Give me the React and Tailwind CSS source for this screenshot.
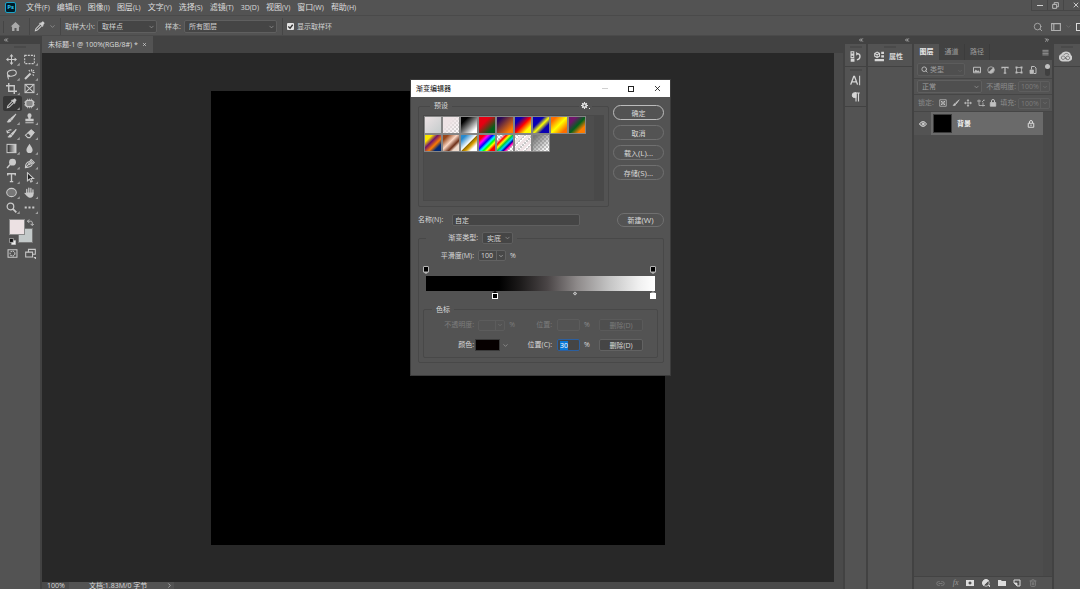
import { useEffect, useRef, useState } from "react";
import {
  ChevronDown,
  ChevronRight,
  ChevronsLeft,
  ChevronsRight,
  Eye,
  Link2,
  Search,
  Trash2,
  X,
} from "lucide-react";

const menus = [
  ["文件", "(F)"],
  ["编辑", "(E)"],
  ["图像", "(I)"],
  ["图层", "(L)"],
  ["文字", "(Y)"],
  ["选择", "(S)"],
  ["滤镜", "(T)"],
  ["", "3D(D)"],
  ["视图", "(V)"],
  ["窗口", "(W)"],
  ["帮助", "(H)"],
];

const Glyph = ({ children, className = "size-[11px]" }) => (
  <svg
    viewBox="0 0 16 16"
    fill="none"
    stroke="currentColor"
    strokeWidth="1.5"
    className={`shrink-0 ${className}`}
    aria-hidden="true"
  >
    {children}
  </svg>
);

const Eyedropper = ({ className }) => (
  <Glyph className={className}>
    <path d="M9 5 2.8 11.2 2 14l2.800-.8L11 7" />
    <path d="m8 3.500 4.500 4.500 1-1-1-1 1.800-1.800c1.400-1.600-1-4-2.600-2.600L10 3.500l-1-1z" fill="currentColor" strokeWidth="1" />
  </Glyph>
);

const Brush = ({ className }) => (
  <Glyph className={className}>
    <path d="M14.500 1.500 7 8l1.500 1.800z" fill="currentColor" />
    <path d="M6 8.500c-3 0-2.500 3.500-5 4.500 2.500 1.500 7 1 7-2.300z" fill="currentColor" stroke="none" />
  </Glyph>
);

const MoveArrows = ({ className }) => (
  <Glyph className={className}>
    <path d="M8 2v12M2 8h12" />
    <path d="M8 0 5.200 3.500h5.600zM8 16l-2.800-3.500h5.600zM0 8l3.500-2.800v5.600zM16 8l-3.500-2.800v5.600z" fill="currentColor" stroke="none" />
  </Glyph>
);

const tools = [
  { name: "移动工具", icon: <MoveArrows /> },
  {
    name: "矩形选框工具",
    icon: (
      <Glyph>
        <rect x="1" y="2" width="14" height="12" strokeDasharray="3 1.500" />
      </Glyph>
    ),
  },
  {
    name: "套索工具",
    icon: (
      <Glyph>
        <ellipse cx="8.500" cy="6" rx="6.500" ry="4.300" transform="rotate(-12 8.500 6)" />
        <path d="M3 9c-1.500 1.500 0 3 1.500 2s-1-3-2-1.500S4 13 3.500 15" />
      </Glyph>
    ),
  },
  {
    name: "魔棒工具",
    icon: (
      <Glyph>
        <path d="m1.500 14.500 8-8" strokeWidth="3" />
        <path d="M11 .5v3M15.500 5h-3M7 1.500l1.500 2M14.500 9.500l-2-1.500M14.500 1.500l-2 2" />
      </Glyph>
    ),
  },
  {
    name: "裁剪工具",
    icon: (
      <Glyph>
        <path d="M4 0v12h12M0 4h12v12" strokeWidth="2" />
      </Glyph>
    ),
  },
  {
    name: "图框工具",
    icon: (
      <Glyph>
        <rect x="1.500" y="2" width="13" height="12" />
        <path d="m2 2.500 12 11M14 2.500l-12 11" />
      </Glyph>
    ),
  },
  { name: "吸管工具", icon: <Eyedropper /> },
  {
    name: "修补工具",
    icon: (
      <Glyph>
        <rect x="2.500" y="3.500" width="11" height="9" rx="3" fill="#888" strokeWidth="2" />
        <path d="M5 1v3M8 1v3M11 1v3M5 12v3M8 12v3M11 12v3M0 6h3M0 10h3M13 6h3M13 10h3" strokeWidth="1" />
      </Glyph>
    ),
  },
  { name: "画笔工具", icon: <Brush /> },
  {
    name: "仿制图章工具",
    icon: (
      <Glyph>
        <path d="M5 3.500a3 3 0 1 1 6 0c0 2-1.500 2.500-1.500 5H14V12H2V8.500h4.500c0-2.500-1.500-3-1.500-5zM2 13.500h12V15H2z" fill="currentColor" stroke="none" />
      </Glyph>
    ),
  },
  {
    name: "历史记录画笔工具",
    icon: (
      <Glyph>
        <path d="M15 2 8 8.500 9.500 10z" fill="currentColor" />
        <path d="M7 9c-2.500 0-2.500 3-5 4 2.500 1.500 7 1 7-1.800z" fill="currentColor" stroke="none" />
        <path d="M2 7c0-3 3-5 6-4M1 3.500 2 7l3.500-1" />
      </Glyph>
    ),
  },
  {
    name: "橡皮擦工具",
    icon: (
      <Glyph>
        <path d="m2 10.500 3.500 3.500h3l6-7.500L10.500 3z" />
        <path d="M6.200 6.900 10.500 3l4 3.500-4 4.700z" fill="currentColor" />
      </Glyph>
    ),
  },
  {
    name: "渐变工具",
    icon: (
      <Glyph>
        <defs>
          <linearGradient id="tool-gradient">
            <stop offset="0" stopColor="#222" />
            <stop offset="1" stopColor="#ddd" />
          </linearGradient>
        </defs>
        <rect x="1.500" y="2" width="13" height="12" fill="url(#tool-gradient)" />
      </Glyph>
    ),
  },
  {
    name: "模糊工具",
    icon: (
      <Glyph>
        <path d="M8 1c2 3.500 4.500 6 4.500 9a4.500 4.500 0 0 1-9 0C3.500 7 6 4.500 8 1z" fill="currentColor" stroke="none" />
      </Glyph>
    ),
  },
  {
    name: "减淡工具",
    icon: (
      <Glyph>
        <circle cx="9.500" cy="6" r="5" fill="currentColor" stroke="none" />
        <path d="m6 9.500-4.500 5" strokeWidth="2" />
      </Glyph>
    ),
  },
  {
    name: "钢笔工具",
    icon: (
      <Glyph>
        <path d="M2 14c0-4 1-8 6-9l4 4c-1 4-6 5-10 5zl5-5M9 3.500l4.500 4.500 1.500-1.500L10.500 2z" />
        <circle cx="8" cy="8.500" r="1.200" />
      </Glyph>
    ),
  },
  {
    name: "横排文字工具",
    icon: (
      <Glyph>
        <path d="M2.500 5V2.500h11V5M8 2.500v11M5.500 14h5" strokeWidth="2" />
      </Glyph>
    ),
  },
  {
    name: "路径选择工具",
    icon: (
      <Glyph>
        <path d="M5 1v12l3-2.800 2 4.300 2-1-2-4h4z" fill="#222" />
      </Glyph>
    ),
  },
  {
    name: "椭圆工具",
    icon: (
      <Glyph>
        <ellipse cx="8" cy="8" rx="7" ry="6" fill="#777" />
      </Glyph>
    ),
  },
  {
    name: "抓手工具",
    icon: (
      <Glyph>
        <path d="M4 9V3.500M7 8V1.500M10 8V2M13 9V4" strokeWidth="1.800" strokeLinecap="round" />
        <path d="M3.200 8h10.700v2.500c0 3-2 5-4.700 5-3 0-4-1.500-8.700-6.500 1-1.300 2-.8 2.700.5z" fill="currentColor" stroke="none" />
      </Glyph>
    ),
  },
  {
    name: "缩放工具",
    icon: (
      <Glyph>
        <circle cx="6.500" cy="6.500" r="4.800" strokeWidth="1.800" />
        <path d="m10 10 5 5" strokeWidth="2.500" />
      </Glyph>
    ),
  },
  {
    name: "编辑工具栏",
    icon: (
      <Glyph>
        <path d="M1 8h3M6.500 8h3M12 8h3" strokeWidth="3" />
      </Glyph>
    ),
  },
];

const presets = [
  { name: "前景色到背景色渐变", fill: "bg-[linear-gradient(135deg,#eee3e5,#c2caca)]" },
  {
    name: "前景色到透明渐变",
    fill: "bg-[linear-gradient(135deg,#eee3e5_35%,transparent),conic-gradient(#c8c8c8_25%,#fff_0_50%,#c8c8c8_0_75%,#fff_0)] bg-[length:100%_100%,4px_4px]",
  },
  { name: "黑, 白渐变", fill: "bg-[linear-gradient(135deg,#000_25%,#fff_80%)]" },
  { name: "红, 绿渐变", fill: "bg-[linear-gradient(135deg,#e60012_35%,#00601b_75%)]" },
  { name: "紫, 橙渐变", fill: "bg-[linear-gradient(135deg,#290a59_20%,#ff7c00_80%)]" },
  { name: "蓝, 红, 黄渐变", fill: "bg-[linear-gradient(135deg,#0a00b2_25%,#ff0000_50%,#fffc00_75%)]" },
  { name: "蓝, 黄, 蓝渐变", fill: "bg-[linear-gradient(135deg,#0a00b2_35%,#fdff00_52%,#0a00b2_70%)]" },
  { name: "橙, 黄, 橙渐变", fill: "bg-[linear-gradient(135deg,#ff6e00_20%,#ffff00_50%,#ff6e00_80%)]" },
  { name: "紫, 绿, 橙渐变", fill: "bg-[linear-gradient(135deg,#6f156c_25%,#00601b_52%,#fd7c00_75%)]" },
  { name: "黄, 紫, 橙, 蓝渐变", fill: "bg-[linear-gradient(135deg,#f9e600_25%,#6f156c_42%,#fd7c00_60%,#002874_76%)]" },
  { name: "铜色渐变", fill: "bg-[linear-gradient(135deg,#97461a_20%,#fbd8c5_45%,#6c2e16_65%,#efdbcd_76%)]" },
  { name: "铬黄渐变", fill: "bg-[linear-gradient(135deg,#2989cc_20%,#fff_49%,#906a00_52%,#d99f00_62%,#fff_76%)]" },
  {
    name: "色谱",
    fill: "bg-[linear-gradient(135deg,#f00_20%,#f0f_32%,#00f_44%,#0ff_54%,#0f0_62%,#ff0_70%,#f00_80%)]",
  },
  {
    name: "透明彩虹渐变",
    fill: "bg-[linear-gradient(135deg,transparent_22%,#f00_32%,#ff0_41%,#0c4_50%,#0cf_58%,#00a_66%,#f0a_72%,transparent_80%),conic-gradient(#c8c8c8_25%,#fff_0_50%,#c8c8c8_0_75%,#fff_0)] bg-[length:100%_100%,4px_4px]",
  },
  {
    name: "透明条纹渐变",
    fill: "bg-[repeating-linear-gradient(135deg,#eee3e5_0_3px,transparent_3px_5px),conic-gradient(#c8c8c8_25%,#fff_0_50%,#c8c8c8_0_75%,#fff_0)] bg-[length:100%_100%,4px_4px]",
  },
  {
    name: "中灰密度",
    fill: "bg-[linear-gradient(135deg,#777_15%,transparent_85%),conic-gradient(#c8c8c8_25%,#fff_0_50%,#c8c8c8_0_75%,#fff_0)] bg-[length:100%_100%,4px_4px]",
  },
];

const Select = ({ label, value, className = "" }) => (
  <div className={`relative rounded-xs border border-[#5f5f5f] ${className}`}>
    <select aria-label={label} className="block h-full w-full appearance-none pl-1 leading-none outline-none">
      <option>{value}</option>
    </select>
    <ChevronDown size={7} className="pointer-events-none absolute top-1/2 right-px -translate-y-1/2 text-[#a8a8a8]" />
  </div>
);

const PercentField = ({ id, value, disabled, className = "" }) => (
  <div className={`flex rounded-xs border ${className}`}>
    <input
      id={id}
      type="text"
      defaultValue={value}
      disabled={disabled}
      className="h-full w-0 flex-1 border-r border-inherit pl-0.5 outline-none"
    />
    <button type="button" disabled={disabled} aria-label="展开滑块" className="flex w-2 items-center justify-center">
      <ChevronDown size={6} />
    </button>
  </div>
);

const MenuBar = () => (
  <header className="flex h-4 shrink-0 items-center border-b border-[#4a4a4a] pb-px pl-[5px] text-[8px] text-[#dedede]">
    <div className="flex size-[11px] items-center justify-center rounded-xs border border-[#1ba4c9] bg-[#001c28] text-[6px] leading-none font-bold text-[#31c5f0]">
      Ps
    </div>
    <nav className="ml-2.5 flex flex-1 gap-[7px] pb-px whitespace-nowrap">
      {menus.map(([label, hotkey]) => (
        <button key={hotkey} type="button" className="leading-none">
          {label}
          <span className="text-[7px]">{hotkey}</span>
        </button>
      ))}
    </nav>
    <div className="flex h-[11px] self-start text-[#c8c8c8]">
      <button type="button" aria-label="最小化" className="flex w-4 items-center justify-center border-b border-l border-[#464646]">
        <span className="h-px w-1.5 bg-[#d0d0d0]" />
      </button>
      <button type="button" aria-label="还原" className="flex w-4 items-center justify-center border-b border-l border-[#464646]">
        <Glyph className="size-[7px]">
          <path d="M1.500 5.500h9v9h-9zM5 5V1.500h9.500V11H11" strokeWidth="2" />
        </Glyph>
      </button>
      <button type="button" aria-label="关闭" className="flex w-[17px] items-center justify-end border-b border-l border-[#464646]">
        <X size={8} strokeWidth={3} />
      </button>
    </div>
  </header>
);

const OptionsBar = () => (
  <div className="flex h-5 shrink-0 items-center border-b border-[#4a4a4a] pt-0.5 pl-[3px] text-[#d0d0d0]">
    <span className="h-3 w-px bg-[#454545]" />
    <button type="button" aria-label="主页" className="ml-1.5 text-[#a9a9a9]">
      <Glyph>
        <path d="M8 1.500 1 8h2v6.500h3.500V10h3v4.500H13V8h2z" fill="currentColor" stroke="none" />
      </Glyph>
    </button>
    <span className="ml-2 h-full w-px bg-[#464646]" />
    <button type="button" aria-label="吸管工具" className="ml-1 flex items-center gap-1">
      <Eyedropper />
      <ChevronDown size={7} className="text-[#a8a8a8]" />
    </button>
    <span className="ml-1 h-full w-px bg-[#464646]" />
    <span className="ml-1 w-[32px] whitespace-nowrap">取样大小:</span>
    <Select label="取样大小" value="取样点" className="h-[13px] w-[60px] bg-[#454545]" />
    <span className="ml-2 w-[19px] whitespace-nowrap">样本:</span>
    <Select label="样本" value="所有图层" className="h-[13px] w-[93px] bg-[#454545]" />
    <span className="ml-[5px] h-full w-px bg-[#464646]" />
    <label className="ml-1 flex items-center gap-[3px] whitespace-nowrap">
      <span className="relative flex size-[7px]">
        <input type="checkbox" defaultChecked className="size-[7px] appearance-none rounded-[1px] bg-[#e4e4e4]" />
        <Glyph className="pointer-events-none absolute inset-0 size-[7px] text-[#333]">
          <path d="m3 8 4 4 6-8" strokeWidth="3" />
        </Glyph>
      </span>
      显示取样环
    </label>
    <div className="ml-auto flex items-center text-[#b0b0b0]">
      <button type="button" aria-label="搜索">
        <Search size={10} />
      </button>
      <button type="button" aria-label="选择工作区" className="ml-2 flex items-center gap-1">
        <Glyph className="size-[10px]">
          <path d="M1 2.500h14v11H1zM4.500 3v10" strokeWidth="1.800" />
        </Glyph>
        <ChevronDown size={7} className="text-[#777]" />
      </button>
      <button type="button" aria-label="共享" className="ml-1 h-2 w-1 border-y border-l border-[#dadada]" />
    </div>
  </div>
);

const ToolBar = () => {
  const [active, setActive] = useState("吸管工具");

  return (
    <aside className="flex w-[42px] shrink-0 flex-col border-r-2 border-[#424242] text-[#cacaca]">
      <div className="flex h-2 shrink-0 items-center bg-[#424242] pl-[3px]">
        <ChevronsLeft size={6} strokeWidth={3} />
      </div>
      <span className="mx-auto mt-0.5 h-0.5 w-3 shrink-0 bg-[#4a4a4a]" />
      <div className="mt-1 grid h-[163px] shrink-0 grid-cols-2 grid-rows-11 pl-[3px]">
        {tools.map((tool) => (
          <button
            key={tool.name}
            type="button"
            title={tool.name}
            onClick={() => setActive(tool.name)}
            className={`flex items-end justify-center rounded-xs pb-px ${active === tool.name ? "bg-[#363636]" : ""}`}
          >
            <span className="mb-px ml-px">{tool.icon}</span>
            <span className="size-[3px] bg-[#a0a0a0] [clip-path:polygon(100%_0,100%_100%,0_100%)]" />
          </button>
        ))}
      </div>
      {/* Foreground / background colours */}
      <div className="relative mt-1 ml-[9px] h-[26px] w-[26px] shrink-0">
        <button type="button" aria-label="背景色" className="absolute top-[9px] left-[9px] size-[15px] border border-[#777] bg-[#c3c9c9]" />
        <button type="button" aria-label="前景色" className="absolute top-0 left-0 size-4 border border-[#8a8a8a] bg-[#ece1e3]" />
        <button type="button" aria-label="切换颜色" className="absolute top-0 left-[18px]">
          <Glyph className="size-[7px]">
            <path d="M1 5h7c3 0 4 1 4 4v5M5 1 1 5l4 4M8 11l4 4 4-4" strokeWidth="2" />
          </Glyph>
        </button>
        <button type="button" aria-label="默认颜色" className="absolute bottom-0 left-0">
          <Glyph className="size-[7px]">
            <path d="M6 6h9v9H6z" fill="#eee" />
            <path d="M1 1h9v9H1z" fill="#111" />
          </Glyph>
        </button>
      </div>
      <div className="mt-[3px] grid shrink-0 grid-cols-2 place-items-center pl-[3px]">
        <button type="button" aria-label="快速蒙版">
          <Glyph>
            <path d="M1.500 2.500h13v11h-13z" />
            <circle cx="8" cy="8" r="3.500" strokeDasharray="2 1" />
          </Glyph>
        </button>
        <button type="button" aria-label="屏幕模式">
          <Glyph>
            <path d="M5 2h10v7H5z" />
            <path d="M1 6h10v7H1z" fill="#535353" />
            <path d="M14 14h2v2z" fill="currentColor" />
          </Glyph>
        </button>
      </div>
    </aside>
  );
};

const Workspace = () => (
  <main className="flex min-w-0 flex-1 flex-col border-r-2 border-[#424242]">
    <div className="flex h-[17px] shrink-0 bg-[#424242]">
      <div className="flex items-center gap-1 bg-[#535353] px-1.5 whitespace-nowrap text-[#dcdcdc]">
        <span>未标题-1 @ 100%(RGB/8#) *</span>
        <button type="button" aria-label="关闭文档">
          <X size={5} strokeWidth={3} />
        </button>
      </div>
    </div>
    <div className="flex min-h-0 flex-1">
      <div className="flex min-w-0 flex-1 items-center justify-center overflow-hidden bg-[#282828]">
        <div className="size-[454px] shrink-0 bg-black" />
      </div>
      <div className="w-[9px] shrink-0 bg-[#4a4a4a]" />
    </div>
    <footer className="flex shrink-0 bg-[#4a4a4a] leading-[7px] text-[#dcdcdc]">
      <span className="w-[27px] pl-[5px]">100%</span>
      <span className="flex w-[105px] items-center justify-between bg-[#535353] pr-px pl-5 whitespace-nowrap">
        文档:1.83M/0 字节
        <ChevronRight size={7} />
      </span>
    </footer>
  </main>
);

const DockHeader = ({ children }) => (
  <div className="flex h-2 shrink-0 items-center justify-end bg-[#424242] pr-0.5 text-[#d0d0d0]">{children}</div>
);

const Grip = () => <span className="mx-auto mt-0.5 h-0.5 w-3 shrink-0 bg-[#4a4a4a]" />;

const LayersPanel = () => (
  <section className="flex min-h-0 flex-1 flex-col text-[#9c9c9c]">
    <div className="flex h-4 shrink-0 items-stretch bg-[#424242]" role="tablist">
      <button type="button" role="tab" aria-selected="true" className="w-[25px] bg-[#535353] font-bold text-[#e6e6e6]">
        图层
      </button>
      <button type="button" role="tab" aria-selected="false" className="w-[26px] border-r border-[#3c3c3c]">
        通道
      </button>
      <button type="button" role="tab" aria-selected="false" className="w-[25px] border-r border-[#3c3c3c]">
        路径
      </button>
      <button type="button" aria-label="面板菜单" className="ml-auto pr-[3px]">
        <Glyph className="size-[7px]">
          <path d="M1 3h14M1 6.500h14M1 10h14M1 13.500h14" strokeWidth="2" />
        </Glyph>
      </button>
    </div>
    <div className="flex h-[19px] shrink-0 items-center border-b border-[#464646] pt-px pr-0.5 pl-[3px]">
      <div className="flex h-[13px] w-[48px] items-center rounded-xs border border-[#5c5c5c] bg-[#4f4f4f] pl-[3px]">
        <Search size={7} strokeWidth={3} className="text-[#c0c0c0]" />
        <div className="relative flex-1">
          <select aria-label="图层过滤" className="block w-full appearance-none pl-0.5 leading-none outline-none">
            <option>类型</option>
          </select>
          <ChevronDown size={6} className="pointer-events-none absolute top-0.5 right-px text-[#6c6c6c]" />
        </div>
      </div>
      <div className="ml-2 flex flex-1 items-center justify-between pr-2 text-[#bcbcbc]">
        <button type="button" aria-label="像素图层">
          <Glyph className="size-2">
            <path d="M1 2.500h14v11H1z" strokeWidth="2" />
            <path d="m2 12 3.500-5 3 3 2-1.500L14 12z" fill="currentColor" stroke="none" />
          </Glyph>
        </button>
        <button type="button" aria-label="调整图层">
          <Glyph className="size-2">
            <circle cx="8" cy="8" r="6.500" />
            <path d="M13 3.500A7 7 0 0 1 3.500 13z" fill="currentColor" />
          </Glyph>
        </button>
        <button type="button" aria-label="文字图层">
          <Glyph className="size-2">
            <path d="M2 5V2.500h12V5M8 2.500v11M5.500 14h5" strokeWidth="2.500" />
          </Glyph>
        </button>
        <button type="button" aria-label="形状图层">
          <Glyph className="size-2">
            <path d="M3 3h10v10H3z" />
            <path d="M1 1h4v4H1zM11 1h4v4h-4zM1 11h4v4H1zM11 11h4v4h-4z" fill="currentColor" stroke="none" />
          </Glyph>
        </button>
        <button type="button" aria-label="智能对象">
          <Glyph className="size-2">
            <path d="M5 7V1h6l3 3v11h-4" strokeWidth="2" />
            <path d="M2 8h7v7H2z" fill="currentColor" />
          </Glyph>
        </button>
      </div>
      <button type="button" aria-label="打开图层过滤" className="flex h-3 w-[5px] flex-col rounded-full bg-[#404040]">
        <span className="size-[5px] rounded-full bg-[#c2c2c2]" />
      </button>
    </div>
    <div className="flex h-4 shrink-0 items-center border-b border-[#464646] pr-0.5 pl-[3px] text-[#8c8c8c]">
      <Select label="混合模式" value="正常" className="h-[13px] flex-1 bg-[#4f4f4f] text-[#a0a0a0]" />
      <label htmlFor="layer-opacity" className="mr-0.5 ml-1 whitespace-nowrap">
        不透明度:
      </label>
      <PercentField id="layer-opacity" value="100%" className="h-[11px] w-8 border-[#5e5e5e] text-[#7c7c7c]" />
    </div>
    <div className="flex h-[17px] shrink-0 items-center border-b border-[#464646] pr-0.5 pl-1 text-[#8c8c8c]">
      <span className="w-[18px] whitespace-nowrap">锁定:</span>
      <div className="flex flex-1 items-center justify-between px-[3px] text-[#c0c0c0]">
        <button type="button" aria-label="锁定透明像素">
          <Glyph className="size-2">
            <path d="M1.500 1.500h13v13h-13z" />
            <path d="M4 4h3v3H4zM9 4h3v3H9zM6.500 6.500h3v3h-3zM4 9h3v3H4zM9 9h3v3H9z" fill="currentColor" stroke="none" />
          </Glyph>
        </button>
        <button type="button" aria-label="锁定图像像素">
          <Brush className="size-2" />
        </button>
        <button type="button" aria-label="锁定位置">
          <MoveArrows className="size-2" />
        </button>
        <button type="button" aria-label="防止嵌套">
          <Glyph className="size-2">
            <path d="M4 1v12h12M0 4h8M12 15V7M10 6l4-4M14 1v3" />
          </Glyph>
        </button>
        <button type="button" aria-label="锁定全部">
          <Glyph className="size-2">
            <path d="M2.500 7h11v7.500h-11z" fill="currentColor" />
            <path d="M5 7V4a3 3 0 0 1 6 0v3" strokeWidth="2" />
          </Glyph>
        </button>
      </div>
      <label htmlFor="layer-fill" className="mr-0.5 whitespace-nowrap">
        填充:
      </label>
      <PercentField id="layer-fill" value="100%" className="h-[11px] w-8 border-[#5e5e5e] text-[#7c7c7c]" />
    </div>
    <div className="flex min-h-0 flex-1">
      <div className="flex-1 bg-[#4d4d4d]">
        <div className="flex h-[23px] items-stretch bg-[#535353]">
          <button type="button" aria-label="图层可见性" className="flex w-[17px] items-center justify-center text-[#e4e4e4]">
            <Eye size={8} strokeWidth={3} />
          </button>
          <div className="flex flex-1 items-center bg-[#6a6a6a] pr-2 pl-0.5 text-[#f0f0f0]">
            <span className="size-[19px] border border-[#3a3a3a] bg-black" />
            <span className="ml-[5px] flex-1 font-bold">背景</span>
            <Glyph className="size-2 text-[#dcdcdc]">
              <path d="M2.500 6.500h11v8h-11z" strokeWidth="2" />
              <path d="M5 6V4a3 3 0 0 1 6 0v2M8 9v3" strokeWidth="2" />
            </Glyph>
          </div>
        </div>
      </div>
      <div className="w-[9px] bg-[#4a4a4a]" />
    </div>
    <div className="flex h-[13px] shrink-0 items-center justify-between border-t border-[#434343] pr-[15px] pl-[22px] text-[#dcdcdc]">
      <button type="button" aria-label="链接图层" className="text-[#858585]">
        <Link2 size={9} />
      </button>
      <button type="button" aria-label="图层样式" className="font-[Liberation_Serif] text-[8px] leading-none text-[#9a9a9a] italic">
        fx
      </button>
      <button type="button" aria-label="添加蒙版">
        <Glyph className="size-2">
          <path d="M0 2h16v12H0zM8 5a3 3 0 1 0 .01 0z" fill="currentColor" stroke="none" fillRule="evenodd" />
        </Glyph>
      </button>
      <button type="button" aria-label="新建调整图层">
        <Glyph className="size-2">
          <circle cx="8" cy="8" r="6.500" />
          <path d="M13 3A7 7 0 1 0 3 13z" fill="currentColor" />
          <path d="M13 13h3v3z" fill="currentColor" />
        </Glyph>
      </button>
      <button type="button" aria-label="新建组">
        <Glyph className="size-2">
          <path d="M0 2h6l1.500 2H16v10H0z" fill="currentColor" stroke="none" />
        </Glyph>
      </button>
      <button type="button" aria-label="新建图层">
        <Glyph className="size-2">
          <path d="M2 8V2h12v12H8" strokeWidth="2" />
          <path d="M2 8h6v6z" fill="currentColor" />
        </Glyph>
      </button>
      <button type="button" aria-label="删除图层" className="text-[#7c7c7c]">
        <Trash2 size={8} strokeWidth={3} />
      </button>
    </div>
  </section>
);

const Docks = () => (
  <aside className="flex shrink-0 gap-0.5 bg-[#424242] text-[#d6d6d6]">
    <div className="flex w-[21px] flex-col bg-[#535353]">
      <DockHeader>
        <ChevronsLeft size={6} strokeWidth={3} />
      </DockHeader>
      <div className="flex h-[23px] flex-col items-center border-b border-[#424242]">
        <Grip />
        <button type="button" aria-label="历史记录" className="mt-[3px]">
          <Glyph>
            <path d="M1.500 1h4v3.500h-4zM1.500 6h4v3.500h-4z" />
            <path d="M1 11h5.500v4.500H1zM9 1v6l3-3z" fill="currentColor" stroke="none" />
            <path d="M10 4c6-1 6 8 0 9" strokeWidth="2" />
          </Glyph>
        </button>
      </div>
      <div className="flex h-10 flex-col items-center border-b border-[#424242]">
        <Grip />
        <button type="button" aria-label="字符" className="mt-1">
          <Glyph>
            <path d="M1 14 5.500 2h1L11 14M3 10h6" strokeWidth="2" />
            <path d="M14 1v14" />
          </Glyph>
        </button>
        <button type="button" aria-label="段落" className="mt-1.5">
          <Glyph className="size-[10px]">
            <path d="M8 9H6a4 4 0 0 1 0-8h2z" fill="currentColor" />
            <path d="M8 1.500h6M8 1v14M12 1v14" strokeWidth="1.800" />
          </Glyph>
        </button>
      </div>
    </div>
    <div className="flex w-11 flex-col bg-[#535353]">
      <DockHeader>
        <ChevronsLeft size={6} strokeWidth={3} />
      </DockHeader>
      <div className="flex h-[23px] flex-col border-b border-[#424242]">
        <Grip />
        <button type="button" className="mt-[3px] ml-1.5 flex items-center gap-1 font-bold">
          <Glyph>
            <path d="M1 3.500 4.500 1.500 8 3.500v4L4.500 9.500 1 7.500zM1 3.500l3.500 2 3.500-2M4.500 5.500v4" />
            <path d="M10.500 1h4v3.500h-4zM10.500 6h4v3.500h-4zM1 11.500h13.500V15H1z" fill="currentColor" stroke="none" />
          </Glyph>
          属性
        </button>
      </div>
    </div>
    <div className="flex w-[138px] flex-col bg-[#535353]">
      <DockHeader>
        <ChevronsRight size={6} strokeWidth={3} />
      </DockHeader>
      <LayersPanel />
    </div>
    <div className="flex w-[26px] flex-col bg-[#535353]">
      <DockHeader />
      <div className="flex h-[23px] flex-col border-b border-[#424242]">
        <Grip />
        <button type="button" aria-label="库" className="mt-[3px] ml-[5px] self-start">
          <svg viewBox="0 0 24 20" fill="none" stroke="#535353" strokeWidth="1.200" className="h-[11px] w-[13px]">
            <path d="M7 19C-2 19-2 7 4 6 7-1 20-1 22 7c5 4 2 12-4 12z" fill="#cfcfcf" stroke="none" />
            <path d="M15 15 9 9.500C5 7 2 14 7 15.500c3 0 4-2 6-4.500 5-5 9 2 5 4.500-3 1-5-1-7-3M9 7c3-4 8-3 9 0" />
          </svg>
        </button>
      </div>
    </div>
  </aside>
);

const dialogButtons = [
  { label: "确定", hotkey: "", border: "border-[#bcbcbc]" },
  { label: "取消", hotkey: "", border: "border-[#707070]" },
  { label: "载入", hotkey: "(L)...", border: "border-[#707070]" },
  { label: "存储", hotkey: "(S)...", border: "border-[#707070]" },
];

const OpacityStop = ({ at }) => (
  <button type="button" aria-label="不透明度色标" className="absolute top-0 -translate-x-1/2" style={{ left: `${at}%` }}>
    <svg viewBox="0 0 6 8" className="h-2 w-1.5">
      <path d="M1 0h4l1 1v5L3 8 0 6V1z" fill="#b4b4b4" />
      <path d="M1 1h4v4.500H1z" fill="#000" />
    </svg>
  </button>
);

const ColorStop = ({ at, color, tip }) => (
  <button type="button" aria-label="色标" className="absolute top-0 -translate-x-1/2" style={{ left: `${at}%` }}>
    <svg viewBox="0 0 6 8" className="h-2 w-1.5">
      <path d="M3 0 6 2.500H0z" fill={tip} />
      <path d="M0 2h6v6H0z" fill="#fff" />
      <path d="M1 3h4v4H1z" fill={color} />
    </svg>
  </button>
);

const GradientEditor = () => {
  const positionRef = useRef(null);
  const [name, setName] = useState("自定");
  const [position, setPosition] = useState("30");

  useEffect(() => {
    positionRef.current?.focus();
    positionRef.current?.select();
  }, []);

  return (
    <div
      role="dialog"
      aria-label="渐变编辑器"
      className="absolute top-20 left-[411px] w-[259px] bg-[#535353] pb-3 text-[#dadada] shadow-[0_0_0_1px_#3c3c3c]"
    >
      <div className="flex h-[17px] items-center bg-white pl-[5px] text-black">
        <span className="flex-1">渐变编辑器</span>
        <button type="button" aria-label="最小化" className="flex w-[26px] justify-center">
          <span className="h-px w-1.5 bg-[#d0d0d0]" />
        </button>
        <button type="button" aria-label="最大化" className="flex w-[26px] justify-center">
          <span className="size-1.5 border border-[#222]" />
        </button>
        <button type="button" aria-label="关闭" className="flex w-[26px] justify-center">
          <X size={9} strokeWidth={2} />
        </button>
      </div>

      <div className="pt-1 pr-1.5 pl-[7px]">
        <div className="flex items-start">
          <fieldset className="relative h-[106px] w-[191px] rounded-xs border border-[#484848] px-1 pb-[5px]">
            <legend className="ml-[7px] h-[10px] px-1 leading-[10px]">预设</legend>
            <button
              type="button"
              aria-label="预设菜单"
              className="absolute -top-[9px] right-4 flex items-end bg-[#535353] px-0.5 text-[#e6e6e6]"
            >
              <Glyph className="size-[7px]">
                <circle cx="8" cy="8" r="4" strokeWidth="3.500" />
                <path d="M8 0v3M8 13v3M0 8h3M13 8h3M2.500 2.500l2 2M11.500 11.500l2 2M2.500 13.500l2-2M11.500 4.500l2-2" strokeWidth="2.500" />
              </Glyph>
              <span className="ml-px size-px bg-[#e6e6e6]" />
            </button>
            <div className="mt-1 flex h-[86px] border border-[#494949] bg-[#4d4d4d]">
              <div className="grid flex-1 grid-cols-[repeat(9,18px)] content-start">
                {presets.map((preset) => (
                  <button
                    key={preset.name}
                    type="button"
                    title={preset.name}
                    className={`h-[18px] border border-[#858585] bg-origin-border ${preset.fill}`}
                  />
                ))}
              </div>
              <div className="w-[9px] bg-[#494949]" />
            </div>
          </fieldset>
          <div className="mt-1 ml-1 flex flex-1 flex-col gap-[5px]">
            {dialogButtons.map((button) => (
              <button
                key={button.label}
                type="button"
                className={`h-[15px] rounded-full border leading-none ${button.border}`}
              >
                {button.label}
                <span className="text-[8px]">{button.hotkey}</span>
              </button>
            ))}
          </div>
        </div>

        <div className="mt-1.5 flex h-3.5 items-center">
          <label htmlFor="gradient-name" className="w-[34px] whitespace-nowrap">
            名称(N):
          </label>
          <input
            id="gradient-name"
            type="text"
            value={name}
            onChange={(e) => setName(e.target.value)}
            className="h-3 w-32 rounded-xs border border-[#5f5f5f] bg-[#454545] pl-0.5 outline-none"
          />
          <button type="button" className="ml-auto h-3.5 w-[47px] rounded-full border border-[#707070] leading-none">
            新建<span className="text-[8px]">(W)</span>
          </button>
        </div>

        <fieldset className="mt-[5px] rounded-xs border border-[#484848] pb-1">
          <legend className="ml-[7px] flex h-3 items-center gap-1 pr-1">
            <span className="w-[52px] text-right">渐变类型:</span>
            <Select label="渐变类型" value="实底" className="h-3 w-[31px] bg-[#454545]" />
          </legend>
          <div className="mt-1.5 flex h-[11px] items-center gap-1 pl-[7px]">
            <label htmlFor="smoothness" className="w-12 text-right whitespace-nowrap">
              平滑度(M):
            </label>
            <PercentField id="smoothness" value="100" className="h-[11px] w-7 border-[#626262] bg-[#484848]" />
            <span>%</span>
          </div>
          {/* Gradient ramp with its stops */}
          <div className="mt-[5px] mr-2 ml-[7px]">
            <div className="relative h-2">
              <OpacityStop at={0} />
              <OpacityStop at={99} />
            </div>
            <div className="mt-0.5 h-[15px] bg-[linear-gradient(90deg,#000_32%,#1c1a1a_41%,#4a4546_53%,#8e8a8a_66%,#c4c4c4_80%,#f0f0f0_93%,#fff)]" />
            <div className="relative h-[9px]">
              <ColorStop at={30} color="#000" tip="#000" />
              <button
                type="button"
                aria-label="颜色中点"
                className="absolute top-px left-[65%] size-[3px] -translate-x-1/2 rotate-45 border border-[#c8c8c8]"
              />
              <ColorStop at={99} color="#fff" tip="#a0a0a0" />
            </div>
          </div>
          <fieldset className="mt-[5px] mr-[5px] ml-1 rounded-xs border border-[#484848] pb-1.5">
            <legend className="ml-2 h-[9px] px-1 leading-[9px]">色标</legend>
            <div className="grid grid-cols-[50px_41px_37px_28px_19px_44px] items-center gap-y-2 pt-[5px] whitespace-nowrap">
              <label htmlFor="stop-opacity" className="text-right text-[#7c7c7c]">
                不透明度:
              </label>
              <div className="flex items-center gap-1 pl-1 text-[#7c7c7c]">
                <PercentField id="stop-opacity" disabled className="h-[11px] w-7 border-[#5c5c5c]" />
                <span>%</span>
              </div>
              <label htmlFor="stop-opacity-position" className="text-right text-[#7c7c7c]">
                位置:
              </label>
              <input
                id="stop-opacity-position"
                type="text"
                disabled
                className="ml-[5px] h-3 w-[23px] rounded-xs border border-[#5c5c5c]"
              />
              <span className="pl-1 text-[#8c8c8c]">%</span>
              <button type="button" disabled className="h-3 rounded-xs border border-[#5a5a5a] bg-[#4e4e4e] leading-none text-[#7c7c7c]">
                删除(D)
              </button>

              <span className="text-right">颜色:</span>
              <div className="flex items-center gap-0.5 pl-px">
                <button type="button" aria-label="颜色" className="h-3 w-[25px] border border-[#3a3a3a] bg-[#060000]" />
                <ChevronDown size={7} className="text-[#a8a8a8]" />
              </div>
              <label htmlFor="stop-position" className="text-right">
                位置(C):
              </label>
              <input
                ref={positionRef}
                id="stop-position"
                type="text"
                value={position}
                onChange={(e) => setPosition(e.target.value)}
                className="ml-[5px] h-3 w-[23px] rounded-xs border border-[#2c5f9e] bg-[#454545] pl-0.5 outline-none selection:bg-[#0a78d7] selection:text-white"
              />
              <span className="pl-1">%</span>
              <button type="button" className="h-3 rounded-xs border border-[#626262] bg-[#454545] leading-none">
                删除(D)
              </button>
            </div>
          </fieldset>
        </fieldset>
      </div>
    </div>
  );
};

const App = () => {
  return (
    <div className="relative flex h-screen flex-col overflow-hidden bg-[#535353] font-['Open_Sans','Noto_Sans_CJK_SC',sans-serif] text-[7px] leading-[10px]">
      <MenuBar />
      <OptionsBar />
      <div className="flex min-h-0 flex-1">
        <ToolBar />
        <Workspace />
        <Docks />
      </div>
      <GradientEditor />
    </div>
  );
};

export default App;
